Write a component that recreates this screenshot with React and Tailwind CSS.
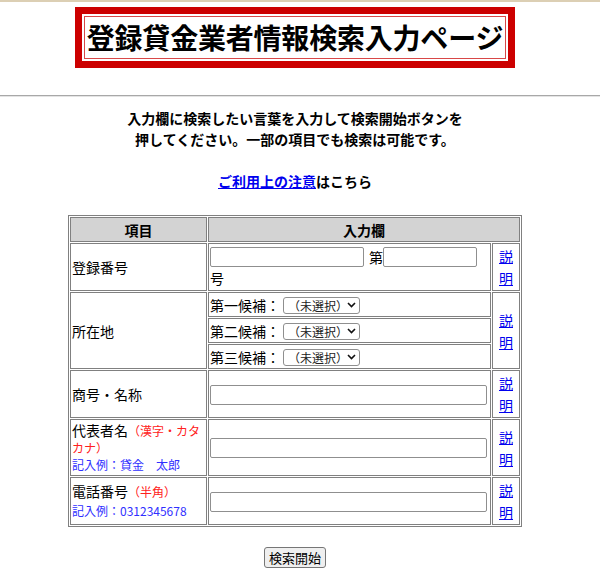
import React from 'react';

const Chevron = () => (
  <svg className="pointer-events-none absolute right-[4px] top-1/2 -translate-y-1/2" width="9" height="6" viewBox="0 0 9 6">
    <path d="M1 1 L4.5 4.5 L8 1" fill="none" stroke="#111" strokeWidth="1.6" />
  </svg>
);

const Pref = ({ label }) => (
  <div className="flex h-[25px] items-center border border-[#808080] px-[1px]">
    <span className="text-[14px]">{label}</span>
    <span className="relative ml-[3px] inline-block">
      <select className="h-[17px] w-[77px] appearance-none rounded-[3px] border border-[#8f8f8f] bg-white pl-[4px] pr-[14px] text-[12px] leading-[15px] text-[#222]">
        <option>（未選択）</option>
      </select>
      <Chevron />
    </span>
  </div>
);

const Help = () => (
  <td className="border border-[#808080] p-[1px] text-center align-middle">
    <a href="#" className="text-[14px] leading-[22px] text-[#0000ee] underline">説明</a>
  </td>
);

const TextBox = ({ w }) => (
  <input type="text" className={`h-[20px] ${w} rounded-[2px] border border-[#8f8f8f] bg-white align-middle`} />
);

const App = () => {
  return (
    <div className="min-h-[584px] w-[600px] bg-white font-['Noto_Sans_CJK_JP',sans-serif] text-black">
      <div className="h-[2px] bg-[#dccfb4]" />
      <div className="w-[590px]">
        {/* Title */}
        <div className="mx-auto mt-[5px] w-fit border-[7px] border-[#cc0000] p-[2px]">
          <div className="border border-[#d84848] px-[2px]">
            <h1 className="text-[28px] font-bold leading-[41px] tracking-[-0.2px]">登録貸金業者情報検索入力ページ</h1>
          </div>
        </div>
      </div>

      <div className="mt-[27px] h-[2px] border-t border-[#a8a8a8] border-b-[#e4e4e4] border-b" />

      <div className="w-[590px]">
        <p className="mt-[11px] text-center text-[14px] font-bold leading-[21px]">
          入力欄に検索したい言葉を入力して検索開始ボタンを<br />
          押してください。一部の項目でも検索は可能です。
        </p>
        <p className="mt-[21px] text-center text-[14px] font-bold leading-[21px]">
          <a href="#" className="text-[#0000ee] underline">ご利用上の注意</a>はこちら
        </p>

        <table className="mx-auto mt-[23px] w-[454px] table-fixed border-separate border-spacing-[1px] border border-[#808080] text-[14px] leading-[18px]">
          <colgroup>
            <col className="w-[137px]" />
            <col className="w-[283px]" />
            <col className="w-[28px]" />
          </colgroup>
          <thead>
            <tr className="h-[25px]">
              <th className="border border-[#808080] bg-[#d3d3d3] p-[1px] font-bold">項目</th>
              <th colSpan={2} className="border border-[#808080] bg-[#d3d3d3] p-[1px] font-bold">入力欄</th>
            </tr>
          </thead>
          <tbody>
            <tr className="h-[47px]">
              <td className="border border-[#808080] p-[1px]">登録番号</td>
              <td className="border border-[#808080] p-[1px] leading-[22px]">
                <div className="flex items-center">
                  <TextBox w="w-[154px]" />
                  <span className="ml-[5px]">第</span>
                  <TextBox w="w-[94px]" />
                </div>
                <div className="leading-[20px]">号</div>
              </td>
              <Help />
            </tr>
            <tr className="h-[77px]">
              <td className="border border-[#808080] p-[1px]">所在地</td>
              <td className="p-0">
                <div className="flex flex-col gap-[1px]">
                  <Pref label="第一候補：" />
                  <Pref label="第二候補：" />
                  <Pref label="第三候補：" />
                </div>
              </td>
              <Help />
            </tr>
            <tr className="h-[45px]">
              <td className="border border-[#808080] p-[1px]">商号・名称</td>
              <td className="border border-[#808080] p-[1px]">
                <TextBox w="w-[277px]" />
              </td>
              <Help />
            </tr>
            <tr className="h-[57px]">
              <td className="border border-[#808080] p-[1px] leading-[17px]">
                代表者名<span className="text-[12px] text-[#ff2020]">（漢字・カタカナ）</span>
                <br />
                <span className="text-[12px] text-[#3030ff]">記入例：貸金　太郎</span>
              </td>
              <td className="border border-[#808080] p-[1px]">
                <TextBox w="w-[277px]" />
              </td>
              <Help />
            </tr>
            <tr className="h-[46px]">
              <td className="border border-[#808080] p-[1px] leading-[18px]">
                電話番号<span className="text-[12px] text-[#ff2020]">（半角）</span>
                <br />
                <span className="text-[12px] text-[#3030ff]">記入例：0312345678</span>
              </td>
              <td className="border border-[#808080] p-[1px]">
                <TextBox w="w-[277px]" />
              </td>
              <Help />
            </tr>
          </tbody>
        </table>

        <div className="mt-[20px] flex justify-center">
          <button className="h-[21px] w-[62px] rounded-[3px] border border-[#767676] bg-[#efefef] text-[13px] leading-[19px]">検索開始</button>
        </div>
      </div>
    </div>
  );
};

export default App;
